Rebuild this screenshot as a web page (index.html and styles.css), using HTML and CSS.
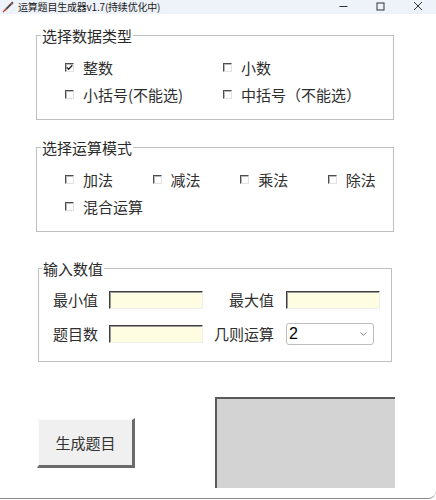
FILE: index.html
```html
<!DOCTYPE html>
<html lang="zh-CN">
<head>
<meta charset="utf-8">
<title>运算题目生成器v1.7(持续优化中)</title>
<link rel="stylesheet" href="styles.css">
</head>
<body>
<div class="window">
  <div class="titlebar">
    <svg class="app-icon" viewBox="0 0 12 12" aria-hidden="true">
      <path d="M10.2 0.6 L11.6 2 L5 8.6 L3.6 7.2 Z" fill="#4a4a4a"/>
      <path d="M3.6 7.2 L5 8.6 L1.2 11.4 L0.6 10.8 Z" fill="#c0392b"/>
      <path d="M9.2 1.6 L10.6 3 L9.8 3.8 L8.4 2.4 Z" fill="#d35445"/>
    </svg>
    <span class="title">运算题目生成器v1.7(持续优化中)</span>
    <div class="controls">
      <span class="ctl"><svg width="9" height="9" viewBox="0 0 9 9"><path d="M0.5 4.5 H8.5" stroke="#333" stroke-width="1"/></svg></span>
      <span class="ctl"><svg width="9" height="9" viewBox="0 0 9 9"><rect x="1" y="1" width="7" height="7" fill="none" stroke="#333" stroke-width="1"/></svg></span>
      <span class="ctl"><svg width="10" height="10" viewBox="0 0 10 10"><path d="M1 1 L9 9 M9 1 L1 9" stroke="#333" stroke-width="1"/></svg></span>
    </div>
  </div>

  <div class="content">
    <section class="group">
      <div class="group-title">选择数据类型</div>
      <div class="options cols2">
        <label class="opt"><span class="box"><svg width="7" height="7" viewBox="0 0 7 7"><polyline points="0.8,3.4 2.6,5.3 6.3,1.2" fill="none" stroke="#222" stroke-width="1.3"/></svg></span>整数</label>
        <label class="opt"><span class="box"></span>小数</label>
        <label class="opt"><span class="box"></span>小括号(不能选)</label>
        <label class="opt"><span class="box"></span>中括号（不能选）</label>
      </div>
    </section>

    <section class="group g2">
      <div class="group-title">选择运算模式</div>
      <div class="options cols4">
        <label class="opt"><span class="box"></span>加法</label>
        <label class="opt"><span class="box"></span>减法</label>
        <label class="opt"><span class="box"></span>乘法</label>
        <label class="opt"><span class="box"></span>除法</label>
        <label class="opt"><span class="box"></span>混合运算</label>
      </div>
    </section>

    <section class="group g3">
      <div class="group-title">输入数值</div>
      <div class="form">
        <span class="flabel">最小值</span>
        <span class="entry"></span>
        <span class="flabel wide">最大值</span>
        <span class="entry"></span>
        <span class="flabel">题目数</span>
        <span class="entry"></span>
        <span class="flabel wide">几则运算</span>
        <span class="select"><span class="value">2</span><svg width="7" height="4" viewBox="0 0 7 4"><polyline points="0.5,0.5 3.5,3.3 6.5,0.5" fill="none" stroke="#8a8a8a" stroke-width="1"/></svg></span>
      </div>
    </section>

    <div class="actions">
      <button class="gen" type="button">生成题目</button>
      <div class="output"></div>
    </div>
  </div>
</div>
</body>
</html>
```

FILE: styles.css
```css
* { box-sizing: border-box; }

html, body {
  margin: 0;
  padding: 0;
  background: #ffffff;
}

body {
  font-family: "Noto Sans CJK SC", "Noto Sans", sans-serif;
  color: #2a2a2a;
}

.window {
  width: 436px;
  height: 499px;
  border-bottom: 1px solid #8c8c8c;
  border-bottom-right-radius: 8px;
  overflow: hidden;
  background: #ffffff;
}

.titlebar {
  height: 14px;
  background: #eef2f9;
  display: flex;
  align-items: center;
}

.app-icon {
  width: 12px;
  height: 12px;
  margin: 0 4px 0 2px;
  flex: none;
}

.title {
  font-size: 10px;
  line-height: 12px;
  color: #1a1a1a;
  white-space: nowrap;
  letter-spacing: -0.2px;
}

.controls {
  margin-left: auto;
  display: flex;
  align-self: stretch;
}

.ctl {
  width: 37px;
  display: flex;
  align-items: center;
  justify-content: center;
  padding-bottom: 2px;
}

.content {
  padding-top: 21px;
}

.group {
  border: 1px solid #bfbfbf;
  margin-left: 36px;
  width: 358px;
}

.g2 {
  margin-top: 27px;
}

.g3 {
  margin-top: 36px;
  margin-left: 38px;
  width: 354px;
}

.group-title {
  margin: -8px 0 0 4px;
  width: fit-content;
  background: #ffffff;
  padding: 0 1px;
  font-size: 15px;
  line-height: 16px;
  color: #2a2a2a;
}

.g3 .group-title {
  margin-left: 3px;
}

.options {
  display: grid;
  grid-auto-rows: 27px;
  padding: 10px 0 11px 28px;
}

.cols2 {
  grid-template-columns: 158px 1fr;
}

.cols4 {
  grid-template-columns: repeat(4, 87.6px);
}

.opt {
  display: flex;
  align-items: center;
  font-size: 15px;
  color: #2e2e2e;
  white-space: nowrap;
}

.box {
  width: 9px;
  height: 9px;
  flex: none;
  margin-right: 9px;
  margin-top: -1px;
  border: 1px solid;
  border-color: #4e4e4e #e2e2e2 #e2e2e2 #4e4e4e;
  box-shadow: inset 1px 1px 0 #b8b8b8;
  background: #ffffff;
  display: flex;
  align-items: center;
  justify-content: center;
}

.form {
  display: grid;
  grid-template-columns: 70px 94px 83px 93px;
  grid-auto-rows: 22px;
  row-gap: 12px;
  align-items: center;
  padding: 12px 0 16px 0;
}

.flabel {
  text-align: right;
  padding-right: 11px;
  font-size: 15px;
  line-height: 22px;
  color: #2e2e2e;
  white-space: nowrap;
}

.flabel.wide {
  padding-right: 12px;
}

.entry {
  height: 18px;
  width: 94px;
  background: #fefde2;
  border: 1px solid;
  border-color: #3e3e3e #eeeeee #eeeeee #3e3e3e;
  box-shadow: inset 1px 1px 0 #9a9a9a;
}

.select {
  width: 88px;
  height: 22px;
  border: 1px solid #bdbdbd;
  border-radius: 3px;
  background: #ffffff;
  display: flex;
  align-items: center;
  justify-content: space-between;
  padding: 0 6px 0 2px;
}

.value {
  font-family: "Liberation Sans", Arial, sans-serif;
  font-size: 16px;
  color: #000000;
}

.actions {
  display: flex;
  align-items: flex-start;
  margin-top: 35px;
}

.gen {
  margin: 21px 0 0 37px;
  width: 98px;
  height: 50px;
  padding: 0;
  background: #f0f0f0;
  border-style: solid;
  border-width: 2px 3px 3px 2px;
  border-color: #fbfbfb #6a6a6a #6a6a6a #fbfbfb;
  font-family: "Noto Sans CJK SC", sans-serif;
  font-size: 15px;
  color: #333333;
}

.output {
  margin-left: 80px;
  width: 180px;
  height: 91px;
  background: #d3d3d3;
  border-top: 2px solid #5a5a5a;
  border-left: 2px solid #5a5a5a;
}
```
